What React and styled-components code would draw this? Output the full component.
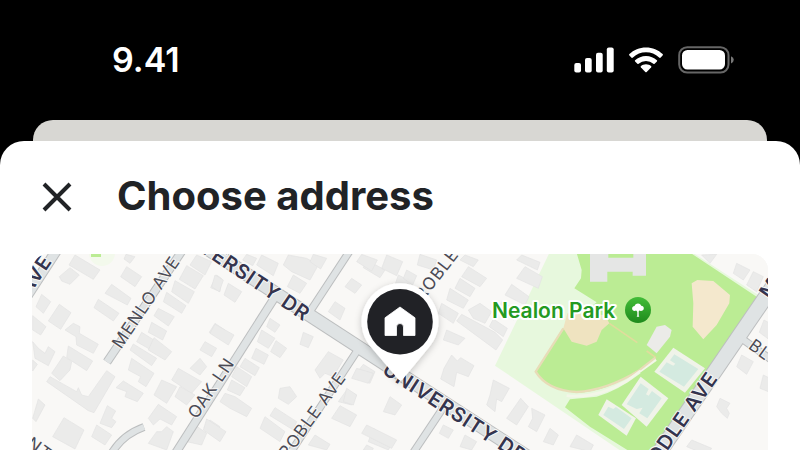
import React from "react";
import styled, { createGlobalStyle } from "styled-components";

const GlobalStyle = createGlobalStyle`
  *, *::before, *::after { box-sizing: border-box; }
  body {
    margin: 0;
    background: #ffffff;
    font-family: Inter, "Liberation Sans", sans-serif;
  }
`;

const Screen = styled.main`
  background: #000000;
  overflow: hidden;
`;

const StatusBar = styled.div`
  display: flex;
  align-items: center;
  justify-content: space-between;
  height: 120px;
  padding: 0 66px 0 112px;
`;

const Time = styled.time`
  color: #ffffff;
  font-size: 34px;
  font-weight: 600;
  line-height: 40px;
`;

const Indicators = styled.div`
  display: flex;
  align-items: center;
  gap: 15px;

  svg { display: block; }
`;

const BackSheet = styled.div`
  height: 21px;
  margin: 0 33px;
  border-radius: 20px 20px 0 0;
  background: #d8d7d3;
`;

const Sheet = styled.section`
  background: #ffffff;
  border-radius: 24px 24px 0 0;
`;

const SheetHeader = styled.header`
  display: flex;
  align-items: center;
  gap: 36px;
  height: 113px;
  padding: 0 33px 2px;
`;

const CloseButton = styled.button`
  display: grid;
  place-items: center;
  width: 48px;
  height: 48px;
  padding: 0;
  border: 0;
  background: transparent;
  color: #212326;
  cursor: pointer;

  svg { display: block; }
`;

const Title = styled.h1`
  margin: 0;
  padding-bottom: 2px;
  color: #212326;
  font-size: 40px;
  font-weight: 700;
  line-height: 48px;
`;

const MapFrame = styled.div`
  margin: 0 32px;
  border-radius: 16px 16px 0 0;
  overflow: hidden;
  background: #f9f8f6;
`;

const MapCanvas = styled.svg`
  display: block;
  width: 100%;
  height: auto;
`;

const StreetLabel = styled.text`
  fill: ${(p) => (p.$major ? "#34344e" : "#4b4b55")};
  font-size: ${(p) => (p.$major ? "20px" : "17px")};
  font-weight: ${(p) => (p.$major ? 600 : 400)};
  letter-spacing: 1px;
  text-anchor: ${(p) => p.$anchor};
  dominant-baseline: central;
  paint-order: stroke;
  stroke: #f9f8f6;
  stroke-width: 2px;
  stroke-linejoin: round;
`;

const ParkLabel = styled.text`
  fill: #249a22;
  font-size: 21px;
  font-weight: 600;
  paint-order: stroke;
  stroke: #ffffff;
  stroke-width: 4px;
  stroke-linejoin: round;
`;

/* Building footprints, one list for each map tile, in tile units (3 to a map unit). */
const TILES = [
  {
    x: 20,
    shapes: [
      "165,30 240,75 220,103 147,60", "118,95 150,68 178,90 150,118 125,108", "320,65 365,95 345,125 302,95",
      "318,28 345,35 330,55 312,42", "275,118 333,160 322,180 255,145", "235,163 297,205 280,228 222,188",
      "65,148 92,170 70,205 48,185", "118,178 153,203 122,253 85,228", "38,212 78,245 62,270 38,255",
      "160,235 180,245 178,265 235,298 220,325 170,300 168,275 135,255", "145,303 218,348 200,377 140,338",
      "38,290 55,310 75,325 85,305 105,320 85,362 45,340", "38,345 52,358 38,378",
      "130,333 155,350 150,375 120,407 95,385",
      "90,395 170,440 175,428 185,450 205,455 260,377 285,395 222,503 205,497 80,410",
      "55,462 75,480 48,530 38,520", "262,482 287,498 275,520 288,530 275,548 240,535",
      "132,518 192,555 165,612 98,575", "230,540 275,570 255,600 215,575",
      "335,340 402,385 378,425 355,410 362,395 325,375",
      "310,408 370,445 352,470 315,455 320,440 288,428", "340,297 410,340 395,362 330,315",
      "365,262 402,285 388,312 350,290", "402,278 455,320 435,345 385,315", "395,232 440,258 428,285 385,262",
      "415,190 463,215 445,243 402,212", "440,142 498,182 485,205 430,170", "465,107 523,140 505,175 455,140",
      "500,62 550,92 525,132 478,103", "530,30 575,50 555,90 510,60", "475,370 545,410 515,445 455,405",
      "425,405 470,425 440,475 402,450", "480,425 525,450 500,480 465,455", "540,340 560,365 540,390 510,370",
      "555,290 590,310 575,335 540,315", "585,235 615,255 600,280 568,262", "590,90 604,100 600,140 572,128",
      "415,478 470,515 455,540 420,522 400,540 385,520", "410,560 425,560 440,545 460,560 440,615 385,595",
      "525,540 560,565 545,600 500,590", "570,525 600,545 590,572 552,548",
    ],
  },
  {
    x: 200,
    shapes: [
      "45,90 70,105 58,140 35,125", "85,115 125,140 105,172 72,150", "185,30 235,55 220,92 170,60",
      "140,28 170,40 158,62 128,45", "265,30 320,40 355,60 330,105 275,80 250,60", "280,90 320,115 300,145 262,125",
      "340,28 380,40 362,72 330,50", "455,100 485,120 465,145 435,125", "405,170 435,190 420,225 385,200",
      "500,45 555,75 540,98 490,68", "45,238 102,270 85,300 30,265", "110,365 155,395 140,425 95,395",
      "185,255 225,280 205,310 172,290", "210,220 240,240 225,262 200,245", "228,287 260,310 240,338 212,320",
      "168,310 205,330 192,358 155,340", "135,340 178,368 165,392 120,365", "310,262 340,275 325,308 300,298",
      "385,320 430,345 400,395 375,385 360,400 345,375", "490,358 525,380 510,415 465,390",
      "75,445 105,455 155,490 140,515 90,490 60,470", "95,405 135,428 120,452 82,435", "20,522 78,560 60,590 10,555",
      "225,488 290,530 280,555 210,512", "195,515 255,560 240,590 180,550", "240,430 270,425 290,455 265,478 235,460",
      "440,435 470,450 455,480 415,470", "420,482 470,510 450,545 395,520", "345,570 390,598 380,615 325,600",
      "520,550 580,590 565,615 505,590", "500,600 520,610 515,620 490,615",
    ],
  },
  {
    x: 340,
    shapes: [
      "65,28 112,45 95,78 50,50", "140,30 188,50 170,92 125,70", "175,90 215,110 200,135 165,120",
      "240,28 290,45 280,75 232,60", "200,75 230,92 218,120 190,100", "375,30 415,45 400,65 360,45",
      "385,65 440,100 420,125 365,95", "360,100 405,130 390,155 345,130", "330,130 385,165 370,190 320,165",
      "305,175 355,205 340,235 295,205", "420,175 455,200 435,235 400,220 385,195", "365,208 465,262 488,285 468,315 350,228",
      "320,255 375,280 355,300 310,285", "335,330 352,348 362,338 402,362 385,395 350,382 342,425 302,402 312,370",
      "50,370 100,385 85,415 35,400", "20,430 50,450 40,480 10,470", "150,455 185,480 165,510 130,500",
      "80,540 170,585 155,610 65,565", "310,540 340,555 325,580 298,565", "375,570 410,590 395,615 360,605",
    ],
  },
  {
    x: 480,
    shapes: [
      "125,30 180,52 172,75 110,45", "135,65 187,95 175,130 110,100", "95,118 147,155 135,180 75,150",
      "65,170 118,200 100,225 55,200", "40,222 82,250 70,275 28,245",
      "40,405 88,430 65,470 50,462 45,500 20,480 30,450", "122,460 145,485 110,540 80,520",
      "155,490 195,510 170,560 145,545 158,520", "210,550 235,570 220,600 190,590", "290,570 340,600 330,620 270,605",
    ],
  },
  {
    x: 620,
    shapes: [
      "245,30 290,28 270,55", "350,55 390,75 370,105 340,85", "400,80 430,95 410,140 380,120",
      "365,330 400,350 380,388 350,365", "432,225 450,235 445,282 418,262", "430,390 450,400 445,440 420,430",
      "300,460 330,475 320,490 328,505 322,520 305,505 290,485", "215,585 275,610 260,630 200,605",
    ],
  },
];

const ROADS = [
  { d: "M25 299 L60 245", width: 10 },
  { d: "M107 362 L188 242", width: 8 },
  { d: "M108 460 Q119 436 144 427", width: 7 },
  { d: "M275 297 L168 465", width: 8 },
  { d: "M311 310 L353 246", width: 7 },
  { d: "M359 348 L270 484", width: 7 },
  { d: "M443 408 L405 465", width: 7 },
  { d: "M738 336 L790 373", width: 7 },
  { d: "M200 244 L545 468", width: 13 },
  { d: "M778 279 L650 466", width: 15 },
];

const STREETS = [
  { text: "AVE", x: 47, y: 257, angle: -56, major: true, anchor: "end" },
  { text: "MENLO AVE", x: 146, y: 302, angle: -56, anchor: "middle" },
  { text: "OAK LN", x: 211, y: 388, angle: -56, anchor: "middle" },
  { text: "ROBLE AVE", x: 342, y: 374, angle: -54, anchor: "end" },
  { text: "ROBLE AVE", x: 418, y: 298, angle: -52, anchor: "start" },
  { text: "UNIVERSITY DR", x: 308, y: 316, angle: 34, major: true, anchor: "end" },
  { text: "UNIVERSITY DR", x: 385, y: 367, angle: 33, major: true, anchor: "start" },
  { text: "MIDDLE AVE", x: 713, y: 374, angle: -55, major: true, anchor: "end" },
  { text: "M", x: 764, y: 296, angle: -55, major: true, anchor: "start" },
  { text: "BL", x: 751, y: 343, angle: 36, anchor: "start" },
  { text: "NT", x: 29, y: 441, angle: 36, anchor: "start" },
];

function SignalIcon() {
  return (
    <svg width="40" height="26" viewBox="0 0 40 26" fill="#fff" role="img" aria-label="Signal">
      <rect x="0.3" y="16" width="6.7" height="9.5" rx="2" />
      <rect x="11" y="11" width="6.7" height="14.5" rx="2" />
      <rect x="22" y="5.7" width="6.7" height="19.8" rx="2" />
      <rect x="32.8" y="0.5" width="6.9" height="25" rx="2" />
    </svg>
  );
}

function WifiIcon() {
  return (
    <svg width="34" height="26" viewBox="0 0 34 26" fill="#fff" role="img" aria-label="Wi-Fi">
      <path d="M17 0.5C23.5 0.5 29.4 3 33.6 7.1Q34.2 7.8 33.6 8.5L31.4 10.7Q30.8 11.2 30.1 10.6A19 19 0 0 0 3.9 10.6Q3.2 11.2 2.6 10.7L0.4 8.5Q-0.2 7.8 0.4 7.1C4.6 3 10.5 0.5 17 0.5Z" />
      <path d="M17 9C21.2 9 25 10.6 27.9 13.3Q28.5 13.9 27.9 14.5L25.6 16.8Q25 17.3 24.4 16.8A11 11 0 0 0 9.6 16.8Q9 17.3 8.4 16.8L6.1 14.5Q5.5 13.9 6.1 13.3C9 10.6 12.8 9 17 9Z" />
      <path d="M17 17.3C19 17.3 20.8 18 22.2 19.2Q22.7 19.7 22.2 20.3L17.7 25Q17 25.6 16.3 25L11.8 20.3Q11.3 19.7 11.8 19.2C13.2 18 15 17.3 17 17.3Z" />
    </svg>
  );
}

function BatteryIcon() {
  return (
    <svg width="56" height="28" viewBox="0 0 56 28" role="img" aria-label="Battery">
      <rect x="1.2" y="1.2" width="49.3" height="25.4" rx="8" fill="none" stroke="#666" strokeWidth="2" />
      <rect x="4" y="4" width="43" height="19.6" rx="5.5" fill="#fff" />
      <path d="M53 10.2Q55.8 11.3 55.8 13.8Q55.8 16.3 53 17.5Z" fill="#777" />
    </svg>
  );
}

function Park() {
  return (
    <g>
      <path d="M208 24 L640 24 L850 160 L530 650 L470 650 L45 362 Z" fill="#e7f8dd" />
      <path
        d="M290 24 L632 24 L830 155 L510 650 L450 620 L330 545 L255 487 L270 463 L350 455 Q410 440 482 385 L470 378 Q380 440 290 444 Q200 430 165 380 L245 255 L350 172 L283 130 L303 100 L305 75 Z"
        fill="#bbec94"
      />
      <path d="M250 250 L262 205 L375 210 L388 235 L365 255 L350 290 L320 302 L275 290 Z" fill="#efe3c0" />
      <path d="M250 250 L167 380 Q202 437 290 441 Q380 436 480 375" fill="none" stroke="#e8dcb8" strokeWidth="7" />
      <path d="M388 235 L472 293 M500 318 L528 338" fill="none" stroke="#e0dc9c" strokeWidth="5" />
      <path d="M260 452 Q350 462 440 408 L528 344" fill="none" stroke="#f3f6e8" strokeWidth="8" />
      <path d="M480 374 L526 338" fill="none" stroke="#e8dcb8" strokeWidth="6" />
      <path d="M330 24 H385 V38 H460 V24 H498 V92 H458 V80 H382 V110 H330 Z" fill="#e5e6e5" />
      <path d="M652 105 L700 108 L750 150 L748 175 L710 240 L670 283 L638 245 L640 175 L635 115 Z" fill="#f4e8cd" />
      <path d="M530 245 L555 240 L575 255 L570 275 L530 325 L500 300 Z" fill="#ebebe8" />
      <path d="M580 308 L675 370 L615 443 L523 380 Z" fill="#f0f3e9" />
      <path d="M583 328 L655 372 L612 425 L538 380 L560 352 L580 362 L586 356 L570 346 Z" fill="#d4eae0" />
      <path d="M482 395 L565 460 L500 545 L425 480 Z" fill="#f0f3e9" />
      <path d="M482 415 L506 432 L498 448 L506 452 L516 438 L545 460 L502 520 L478 505 L488 488 L470 492 L440 478 Z" fill="#d4eae0" />
      <path d="M380 463 L468 520 L440 572 L355 510 Z" fill="#f0f3e9" />
      <path d="M385 485 L400 492 L408 486 L455 520 L432 552 L370 510 Z" fill="#d4eae0" />
    </g>
  );
}

function HomePin() {
  return (
    <g>
      <path
        d="M400 283.3a38.5 38.5 0 0 1 30 62.6L402.5 379.6q-2 2.2-4 0L370 345.9A38.5 38.5 0 0 1 400 283.3Z"
        fill="#fff"
        filter="url(#pin-shadow)"
      />
      <circle cx="400" cy="321.8" r="32.8" fill="#212226" />
      <path
        d="M400 307 L415 317.8 V335.5 H403.5 V327 a3.5 3.5 0 0 0 -7 0 V335.5 H385 V317.8 Z"
        fill="#fff"
        stroke="#fff"
        strokeWidth="0.8"
        strokeLinejoin="round"
      />
    </g>
  );
}

function ParkBadge() {
  return (
    <g>
      <circle cx="638" cy="310" r="13" fill="url(#park-badge)" />
      <path
        d="M638 303.4c1.8 0 2.9 1 3.2 2.3 1.6.1 2.6 1.1 2.6 2.5 0 1.8-1.4 2.7-2.9 2.7-.6 0-1.2-.1-1.6-.4l-.6.9v3.8q.1 1.1.8 1.6h-3q.7-.5.8-1.6v-3.5l-1.2-1.2c-.4.3-1 .4-1.6.4-1.3 0-2.4-.9-2.4-2.3 0-1.5 1.1-2.4 2.5-2.6.3-1.6 1.6-2.6 3.4-2.6Z"
        fill="#fff"
      />
    </g>
  );
}

function NeighborhoodMap() {
  return (
    <MapCanvas viewBox="32 254 736 196" role="img" aria-label="Map of the neighborhood around Nealon Park">
      <defs>
        <filter id="pin-shadow" x="-30%" y="-30%" width="160%" height="160%">
          <feDropShadow dx="0" dy="2" stdDeviation="3.5" floodColor="#000" floodOpacity="0.22" />
        </filter>
        <linearGradient id="park-badge" x1="0" y1="0" x2="0" y2="1">
          <stop offset="0" stopColor="#43bd38" />
          <stop offset="1" stopColor="#1e8a1c" />
        </linearGradient>
      </defs>
      <rect x="32" y="254" width="736" height="196" fill="#f9f8f6" />
      <circle cx="102" cy="253" r="13" fill="#f3f9ec" />
      <rect x="91" y="253" width="10" height="4" fill="#bbec94" />
      <g transform="translate(480 245) scale(0.3333)">
        <Park />
      </g>
      {TILES.map((tile) => (
        <g
          key={tile.x}
          transform={`translate(${tile.x} 245) scale(0.3333)`}
          fill="#ebebea"
          stroke="#e3e3e2"
          strokeWidth="2"
        >
          {tile.shapes.map((points) => (
            <polygon key={points} points={points} />
          ))}
        </g>
      ))}
      {ROADS.map((road) => (
        <path key={road.d} d={road.d} fill="none" stroke="#bcbebf" strokeWidth={road.width + 1} />
      ))}
      {ROADS.map((road) => (
        <path key={road.d} d={road.d} fill="none" stroke="#dfe3e4" strokeWidth={road.width - 1} />
      ))}
      {STREETS.map((s) => (
        <StreetLabel
          key={`${s.text}-${s.x}`}
          $major={s.major}
          $anchor={s.anchor}
          transform={`translate(${s.x} ${s.y}) rotate(${s.angle})`}
        >
          {s.text}
        </StreetLabel>
      ))}
      <ParkLabel x="492" y="318">Nealon Park</ParkLabel>
      <ParkBadge />
      <HomePin />
    </MapCanvas>
  );
}

export default function App() {
  return (
    <>
      <GlobalStyle />
      <Screen>
        <StatusBar>
          <Time>9.41</Time>
          <Indicators>
            <SignalIcon />
            <WifiIcon />
            <BatteryIcon />
          </Indicators>
        </StatusBar>
        <BackSheet />
        <Sheet>
          <SheetHeader>
            <CloseButton type="button" aria-label="Close">
              <svg width="30" height="30" viewBox="0 0 30 30" fill="none" stroke="currentColor" strokeWidth="4">
                <path d="M2 2 L28 28 M28 2 L2 28" />
              </svg>
            </CloseButton>
            <Title>Choose address</Title>
          </SheetHeader>
          <MapFrame>
            <NeighborhoodMap />
          </MapFrame>
        </Sheet>
      </Screen>
    </>
  );
}
